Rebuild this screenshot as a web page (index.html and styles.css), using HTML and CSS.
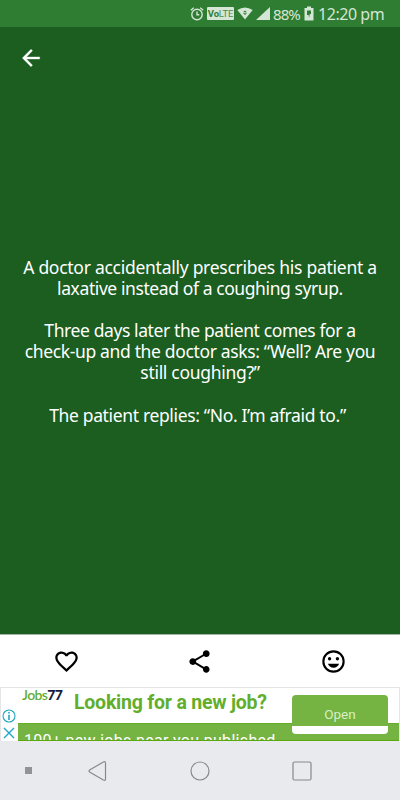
FILE: index.html
```html
<!DOCTYPE html>
<html lang="en">

<head>
    <meta charset="utf-8">
    <title>Joke</title>
    <link rel="stylesheet" href="styles.css">
</head>

<body>

    <div class="statusbar">
        <svg class="alarm" width="14" height="16" viewBox="0 0 14 16">
            <g fill="none" stroke="#d5e5d6" stroke-width="1.4">
                <circle cx="7" cy="8.5" r="5.2"/>
                <path d="M7 5.5v3.3h2.3M.8 4.2L3.8 1.7M13.2 4.2L10.2 1.7"/>
            </g>
        </svg>
        <span class="volte"><b>Vo</b>LTE</span>
        <svg class="wifi" width="16" height="13" viewBox="0 0 16 13">
            <path fill="#d5e5d6" d="M.3 3Q8-2.2 15.7 3L8 12.5z"/>
            <path fill="#2e7d32" d="M6 5.2L8 3.5l2 1.7zM6 6.3h4L8 8z"/>
        </svg>
        <svg class="signal" width="14" height="13" viewBox="0 0 14 13">
            <path fill="#d5e5d6" d="M0 13L14 0v13z"/>
        </svg>
        <span class="percent">88%</span>
        <svg class="battery" width="10" height="15" viewBox="0 0 10 15">
            <path fill="#d5e5d6" d="M3 .5h4V2h2.500v12.500H.5V2H3z"/>
            <path fill="#2e7d32" d="M3 4.500h4v3.500h-1.200L5 12 4.600 9H3z"/>
        </svg>
        <span class="time">12:20 pm</span>
    </div>

    <main>
        <svg class="back" width="26" height="26" viewBox="0 0 24 24">
            <path fill="#fff" d="M20 11H7.83l5.59-5.59L12 4l-8 8 8 8 1.41-1.41L7.83 13H20z" stroke="#fff" stroke-width=".3"/>
        </svg>
        <div class="joke">
            <p><span class="l1">A doctor accidentally prescribes his patient a</span>
            <span class="l2">laxative instead of a coughing syrup.</span></p>
            <p><span class="l3">Three days later the patient comes for a</span>
            <span class="l4">check-up and the doctor asks: “Well? Are you</span>
            <span class="l5">still coughing?”</span></p>
            <p><span class="l6">The patient replies: “No. I’m afraid to.”</span></p>
        </div>
    </main>

    <div class="actions">
        <svg width="27" height="27" viewBox="0 0 24 24">
            <path d="M16.5 3c-1.74 0-3.41.81-4.5 2.09C10.91 3.81 9.24 3 7.5 3 4.42 3 2 5.42 2 8.5c0 3.78 3.4 6.86 8.55 11.54L12 21.35l1.45-1.32C18.6 15.36 22 12.28 22 8.5 22 5.42 19.58 3 16.5 3zm-4.4 15.55l-.1.1-.1-.1C7.14 14.24 4 11.39 4 8.5 4 6.5 5.5 5 7.5 5c1.54 0 3.04.99 3.57 2.36h1.87C13.46 5.99 14.96 5 16.5 5c2 0 3.5 1.5 3.5 3.5 0 2.89-3.14 5.74-7.9 10.05z"/>
        </svg>
        <svg width="27" height="27" viewBox="0 0 24 24">
            <path d="M18 16.08c-.76 0-1.44.3-1.96.77L8.91 12.7c.05-.23.09-.46.09-.7s-.04-.47-.09-.7l7.05-4.11c.54.5 1.25.81 2.04.81 1.66 0 3-1.34 3-3s-1.34-3-3-3-3 1.34-3 3c0 .24.04.47.09.7L8.04 9.81C7.5 9.31 6.79 9 6 9c-1.66 0-3 1.34-3 3s1.34 3 3 3c.79 0 1.5-.31 2.04-.81l7.12 4.16c-.05.21-.08.43-.08.65 0 1.61 1.31 2.92 2.92 2.92s2.92-1.31 2.92-2.92-1.31-2.92-2.92-2.92z"/>
        </svg>
        <svg width="27" height="27" viewBox="0 0 24 24">
            <circle cx="12" cy="12" r="9" fill="none" stroke="#000" stroke-width="1.9"/>
            <circle cx="8.5" cy="9.5" r="1.5"/>
            <circle cx="15.5" cy="9.5" r="1.5"/>
            <path d="M7 14h10c-.7 2-2.5 3.5-5 3.5S7.7 16 7 14z"/>
        </svg>
    </div>

    <div class="ad">
        <div class="rail">
            <svg width="14" height="14" viewBox="0 0 14 14">
                <circle cx="7" cy="7" r="6" fill="none" stroke="#20a5c6" stroke-width="1.1"/>
                <path fill="#20a5c6" d="M6.2 3h1.6v1.6H6.200zM6.200 5.700h1.600V11H6.200z"/>
            </svg>
            <svg width="14" height="14" viewBox="0 0 14 14">
                <path stroke="#20a5c6" stroke-width="1.4" d="M2 2l10 10M12 2L2 12"/>
            </svg>
        </div>
        <div class="banner">
            <div class="top">
                <span class="brand">Jobs<b>77</b></span>
                <span class="headline">Looking for a new job?</span>
            </div>
            <div class="strip">100+ new jobs near you published</div>
        </div>
        <div class="open">Open</div>
    </div>

    <div class="navbar">
        <i class="dot"></i>
        <svg class="navback" width="20" height="22" viewBox="0 0 20 22">
            <path d="M2 9.800L15.400 2q2.100-1 2.100 1v16q0 2-2.100 1L2 12.200q-2-1.200 0-2.400z"/>
        </svg>
        <svg class="home" width="20" height="20" viewBox="0 0 20 20">
            <circle cx="10" cy="10" r="9"/>
        </svg>
        <svg class="recent" width="20" height="20" viewBox="0 0 20 20">
            <rect x="1" y="1" width="18" height="18" rx="1.5"/>
        </svg>
    </div>

</body>

</html>
```
FILE: styles.css
```css
/* General styles */

* {
    box-sizing: border-box;
}

body {
    margin: 0;
    width: 400px;
    height: 800px;
    display: flex;
    flex-direction: column;
    overflow: hidden;
    background-color: #1b5e20;
    font-family: "Noto Sans", sans-serif;
}

svg {
    display: block;
    flex: none;
}

/* Status bar */

.statusbar {
    height: 27px;
    flex: none;
    display: flex;
    align-items: center;
    padding-left: 190px;
    background-color: #2e7d32;
    color: #d5e5d6;
    white-space: nowrap;
}

.volte {
    width: 27px;
    height: 13px;
    margin-left: 3px;
    border-radius: 1px;
    background-color: #d5e5d6;
    color: #4d8d50;
    font: 9.5px/13px Roboto, sans-serif;
    letter-spacing: -0.2px;
    text-align: center;
}

.volte b {
    color: #2e7d32;
}

.wifi {
    margin-left: 3px;
}

.signal {
    margin-left: 3px;
}

.percent {
    width: 32px;
    padding-left: 3px;
    font-size: 15px;
    letter-spacing: -0.9px;
}

.battery {
    margin-left: 2px;
}

.time {
    margin-left: 4px;
    font-size: 16px;
    letter-spacing: -0.45px;
}

/* Joke */

main {
    height: 607px;
    flex: none;
    padding-top: 18px;
}

.back {
    margin-left: 18px;
}

.joke {
    margin-top: 186px;
    color: #fff;
    font-size: 17.5px;
    line-height: 21.1px;
    text-align: center;
    white-space: nowrap;
}

.joke p {
    margin: 0 0 21.1px;
}

.joke span {
    display: block;
}

.l1 { letter-spacing: -0.27px; }
.l2 { letter-spacing: -0.41px; }
.l3 { letter-spacing: -0.4px; }
.l4 { letter-spacing: -0.35px; }
.l5 { letter-spacing: -0.3px; }
.l6 { letter-spacing: -0.35px; padding-right: 5px; }

/* Action buttons */

.actions {
    height: 53px;
    flex: none;
    display: grid;
    grid-template-columns: repeat(3, 1fr);
    place-items: center;
    border-top: 1px solid #a5b5a5;
    background-color: #fff;
}

/* Ad */

.ad {
    position: relative;
    height: 54px;
    flex: none;
    display: flex;
    border: 1px solid #e5e5e7;
    border-bottom: 0;
    background-color: #fff;
}

.rail {
    width: 17px;
    padding: 21px 0 0 1px;
}

.rail svg + svg {
    margin-top: 3px;
}

.banner {
    flex: 1;
    overflow: hidden;
}

.top {
    height: 35px;
    display: flex;
    align-items: flex-start;
    padding-left: 4px;
    white-space: nowrap;
}

.brand {
    width: 52px;
    color: #62ae35;
    font: 600 14px/14px Lato, sans-serif;
    letter-spacing: -0.6px;
}

.brand b {
    color: #171c3d;
}

.headline {
    color: #62ae2b;
    font: bold 19.5px/29px Roboto, sans-serif;
    letter-spacing: -0.22px;
}

.strip {
    height: 18px;
    padding: 7px 0 0 6px;
    overflow: hidden;
    border-top: 1px solid #67ae28;
    border-bottom: 1px solid #5aaa0c;
    background-color: #75b443;
    color: #fff;
    font: 16px/20px Roboto, sans-serif;
    letter-spacing: 0.32px;
    white-space: nowrap;
}

.open {
    position: absolute;
    top: 7px;
    left: 291px;
    width: 96px;
    height: 39px;
    border-radius: 4px;
    border-bottom: 8px solid #fff;
    background-color: #75b443;
    color: #d8efc5;
    font: 13.5px/38px Roboto, sans-serif;
    text-align: center;
}

/* Navigation bar */

.navbar {
    flex: 1;
    display: flex;
    align-items: center;
    padding-left: 25px;
    background-color: #e9eaee;
}

.navbar svg {
    fill: none;
    stroke: #87888b;
    stroke-width: 1.2;
}

.dot {
    width: 7px;
    height: 7px;
    background-color: #929396;
}

.navback {
    margin-left: 56px;
}

.home {
    margin-left: 82px;
}

.recent {
    margin-left: 82px;
}
```
